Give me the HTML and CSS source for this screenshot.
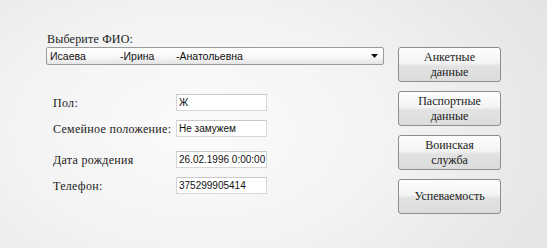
FILE: index.html
```html
<!DOCTYPE html>
<html lang="ru">
<head>
<meta charset="utf-8">
<link rel="stylesheet" href="styles.css">
</head>
<body>
<div class="window">
  <div class="left">
    <div class="title">Выберите ФИО:</div>
    <div class="combo">
      <span class="c1">Исаева</span><span class="c2">-Ирина</span><span class="c3">-Анатольевна</span>
      <svg class="arrow" width="7" height="4" viewBox="0 0 7 4"><path d="M0 0H7L3.5 4Z" fill="#111"/></svg>
    </div>
    <div class="form">
      <div class="row"><div class="lbl">Пол:</div><div class="inp">Ж</div></div>
      <div class="row wide"><div class="lbl">Семейное положение:</div><div class="inp">Не замужем</div></div>
      <div class="row"><div class="lbl">Дата рождения</div><div class="inp">26.02.1996 0:00:00</div></div>
      <div class="row"><div class="lbl">Телефон:</div><div class="inp">375299905414</div></div>
    </div>
  </div>
  <div class="right">
    <button class="btn">Анкетные<br>данные</button>
    <button class="btn">Паспортные<br>данные</button>
    <button class="btn">Воинская<br>служба</button>
    <button class="btn">Успеваемость</button>
  </div>
</div>
</body>
</html>
```

FILE: styles.css
```css
html, body {
  margin: 0;
  padding: 0;
  width: 547px;
  height: 248px;
  overflow: hidden;
}
body {
  background: radial-gradient(ellipse 420px 260px at 200px 130px, #fbfbfb 0%, #f3f3f3 45%, #e8e8e8 80%, #e3e3e3 100%);
  font-family: "Times New Roman", "Liberation Serif", "DejaVu Serif", serif;
  color: #1a1a1a;
}
.window {
  display: flex;
  align-items: flex-start;
  padding: 31px 0 0 46px;
  gap: 14px;
}
.left {
  width: 338px;
}
.title {
  font-family: "Times New Roman", "Liberation Serif", "DejaVu Serif", serif;
  font-size: 12px;
  line-height: 16px;
  height: 16px;
  padding-left: 1px;
  letter-spacing: 0.2px;
}
.combo {
  position: relative;
  display: flex;
  align-items: center;
  height: 16px;
  border: 1px solid #9a9a9a;
  border-radius: 2px;
  background: linear-gradient(#ffffff 0%, #fafafa 50%, #e4e4e4 100%);
  font-family: "Liberation Sans", Arial, sans-serif;
  font-size: 10.5px;
  color: #111;
  padding-left: 3px;
}
.c1 { width: 70px; }
.c2 { width: 56px; }
.c3 { width: 120px; }
.arrow {
  position: absolute;
  right: 5px;
  top: 6px;
}
.form {
  display: flex;
  flex-direction: column;
  margin-top: 29px;
  padding-left: 7px;
}
.row {
  display: flex;
  align-items: center;
  height: 17px;
  margin-bottom: 9px;
}
.row.wide {
  margin-bottom: 14px;
}
.lbl {
  width: 123px;
  font-family: "Times New Roman", "Liberation Serif", "DejaVu Serif", serif;
  font-size: 12px;
  line-height: 14px;
  letter-spacing: 0.3px;
  white-space: nowrap;
}
.inp {
  box-sizing: border-box;
  width: 91px;
  height: 17px;
  border: 1px solid #d6d6d6;
  border-top-color: #c8c8c8;
  background: #fff;
  font-family: "Liberation Sans", Arial, sans-serif;
  font-size: 10px;
  line-height: 15px;
  padding-left: 2px;
  color: #111;
  white-space: nowrap;
  overflow: hidden;
}
.right {
  display: flex;
  flex-direction: column;
  gap: 9px;
  margin-top: 16px;
  width: 103px;
}
.btn {
  height: 35px;
  border: 1px solid #8c8c8c;
  border-radius: 3px;
  background: linear-gradient(#fdfdfd 0%, #f4f4f4 45%, #e2e2e2 55%, #dcdcdc 100%);
  font-family: "Times New Roman", "Liberation Serif", "DejaVu Serif", serif;
  font-size: 12px;
  line-height: 15px;
  color: #1a1a1a;
  padding: 0;
  text-align: center;
}
```
